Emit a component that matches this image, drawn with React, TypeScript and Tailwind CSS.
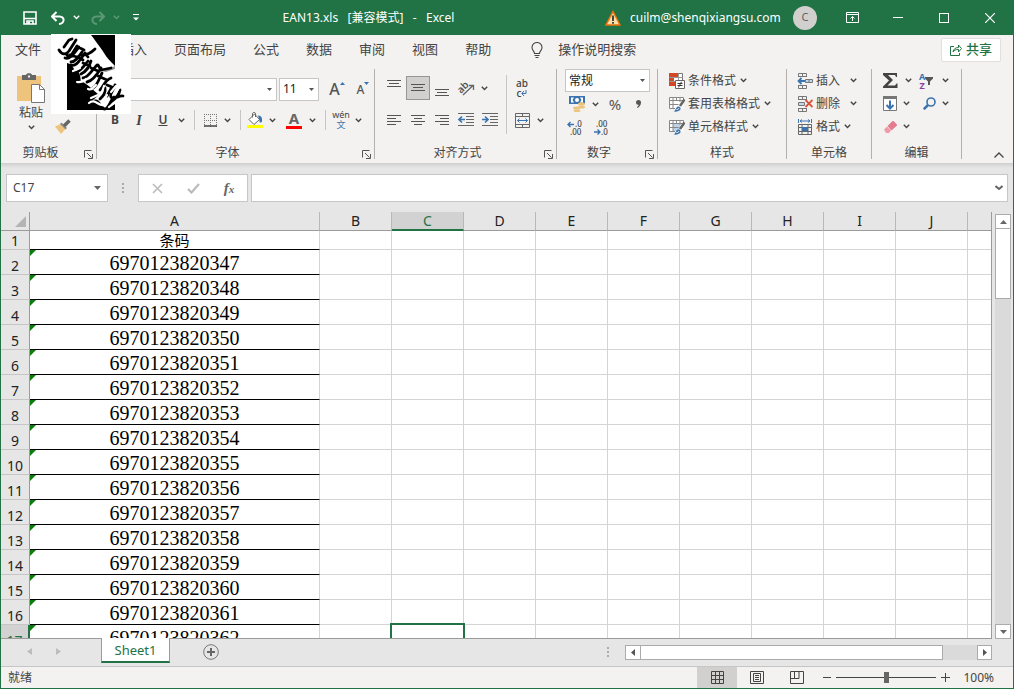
import type { ReactNode } from 'react';
import clsx from 'clsx';

const TABS = ['文件', '开始', '插入', '页面布局', '公式', '数据', '审阅', '视图', '帮助'];
const COLUMNS = ['A', 'B', 'C', 'D', 'E', 'F', 'G', 'H', 'I', 'J'];
const FIRST_CODE = 6970123820347;
const ROWS = Array.from({ length: 17 }, (_, i) => ({
    row: i + 1,
    value: i === 0 ? '条码' : String(FIRST_CODE + i - 1),
}));

/* ---------- shared pieces ---------- */

function Svg({ w = 16, h = 16, children }: { w?: number; h?: number; children: ReactNode }) {
    return (
        <svg width={w} height={h} viewBox={`0 0 ${w} ${h}`} fill="none" className="block shrink-0" aria-hidden="true">
            {children}
        </svg>
    );
}

function Chevron() {
    return (
        <Svg w={7} h={5}>
            <path d="M.8 .8 3.5 3.5 6.2 .8" stroke="currentColor" strokeWidth="1.4" />
        </Svg>
    );
}

function Triangle() {
    return (
        <Svg w={7} h={4}>
            <path d="M0 0h7L3.5 4z" fill="#666" />
        </Svg>
    );
}

function IconButton({ label, className, children }: { label: string; className?: string; children: ReactNode }) {
    return (
        <button type="button" aria-label={label} className={clsx('flex shrink-0 items-center justify-center', className)}>
            {children}
        </button>
    );
}

function Drop({ label, className = 'w-3' }: { label: string; className?: string }) {
    return (
        <IconButton label={label} className={clsx('h-5', className)}>
            <Chevron />
        </IconButton>
    );
}

function Separator({ className }: { className?: string }) {
    return (
        <div className={clsx('flex shrink-0 justify-center', className)}>
            <div className="w-px bg-[#c8c6c4]" />
        </div>
    );
}

function Combo({ label, value, className }: { label: string; value: string; className?: string }) {
    return (
        <div className={clsx('grid h-[23px] shrink-0 items-center border border-[#c6c6c6] bg-white', className)}>
            <select aria-label={label} className="col-start-1 row-start-1 h-full w-full appearance-none bg-transparent pl-[3px] text-[12px] text-[#222]">
                <option>{value}</option>
            </select>
            <span className="pointer-events-none col-start-1 row-start-1 mr-1 justify-self-end">
                <Svg w={5} h={3}>
                    <path d="M0 0h5L2.5 3z" fill="#555" />
                </Svg>
            </span>
        </div>
    );
}

function Group({ label, launcher, className, inner, children }: { label: string; launcher?: boolean; className?: string; inner?: string; children: ReactNode }) {
    return (
        <section aria-label={label} className={clsx('flex h-[90px] shrink-0 flex-col border-r border-[#b3b0ad]', className)}>
            <div className={clsx('min-h-0 flex-1', inner)}>{children}</div>
            <div className="flex h-3 items-center">
                <span className="flex-1 text-center text-[12px] leading-4">{label}</span>
                {launcher && (
                    <IconButton label={`${label}设置`} className="mr-[3px] ml-1 self-end">
                        <Svg w={9} h={9}>
                            <path d="M.5 7.5v-7h7M3 3l4.5 4.5M8.5 4v4.5H4" stroke="#555" />
                        </Svg>
                    </IconButton>
                )}
            </div>
        </section>
    );
}

function MenuRow({ label, icon, wide }: { label: string; icon: ReactNode; wide?: boolean }) {
    return (
        <button type="button" className="flex h-[23px] items-center text-[12px]">
            {icon}
            <span className={clsx('ml-[3px]', wide ? 'mr-[10px]' : 'mr-1')}>{label}</span>
            <Chevron />
        </button>
    );
}

/* ---------- icons ---------- */

function Lines({ rows, y = 0 }: { rows: [number, number][]; y?: number }) {
    return (
        <Svg w={14} h={16}>
            {rows.map(([x, w], i) => (
                <path key={i} d={`M${x} ${y + i * 3 + 0.5}h${w}`} stroke="#555" />
            ))}
        </Svg>
    );
}

function IndentIcon({ out }: { out?: boolean }) {
    return (
        <Svg>
            <path d="M0 1.5h16M8 4.5h8M8 7.5h8M8 10.5h8M0 13.5h16" stroke="#666" />
            <path d={out ? 'M7 7.5H1M4 4.5l-3 3 3 3' : 'M0 7.5h6M3 4.5l3 3-3 3'} stroke="#3b73af" strokeWidth="1.7" />
        </Svg>
    );
}

function DecimalIcon({ less }: { less?: boolean }) {
    return (
        <svg width="17" height="18" viewBox="0 0 17 18" className="block overflow-visible" aria-hidden="true">
            <text x={less ? 3 : 8} y="8" fontSize="8" fontFamily="Noto Sans" fontWeight="500" fill="#444">{less ? '.00' : '.0'}</text>
            <text x={less ? 8 : 3} y="16" fontSize="8" fontFamily="Noto Sans" fontWeight="500" fill="#444">{less ? '.0' : '.00'}</text>
            <path d={less ? 'M1 13h6M4.500 10.500 7 13l-2.500 2.500' : 'M7 5.500H1M3.500 3 1 5.500 3.500 8'} fill="none" stroke="#3b73af" strokeWidth="1.4" />
        </svg>
    );
}

function SheetBrush({ fill }: { fill: string }) {
    return (
        <Svg>
            <path d="M.5 1.500h14v11H.5z" fill="#fff" />
            <path d="M4 5h7v7H4z" fill={fill} />
            <path d="M.5 1.500h14v3M6 12.500H.500v-11M.5 4.500h14M.5 8.500h9M4 1.500v11M11 1.500V6M7.500 1.500v3" stroke="#888" />
            <path d="m15.500 3.500-4.500 6.500" stroke="#666" strokeWidth="2.600" />
            <path d="M4.500 15.500c2.500-.5 2-4.500 4.500-5 1.800-.2 3 1.200 2.500 2.800-.7 2-4.500 2.700-7 2.200z" fill="#3b73af" />
            <path d="M7.500 13.500c1.500 0 2-.5 2.500-1.500" stroke="#fff" />
        </Svg>
    );
}

function CondIcon() {
    return (
        <Svg>
            <path d="M.5 .5h13v12H.5z" fill="#fff" stroke="#777" />
            <path d="M.5 4.500h13M.5 8.500h8M9.500 .5V7" stroke="#999" />
            <path d="M0 0h9v4H0zM0 5h5v3H0zM0 9h6v4H0z" fill="#d24726" />
            <path d="M6.500 7.500h9v8h-9z" fill="#fff" stroke="#666" />
            <path d="M8.500 10.500h5M8.500 12.500h5M12.500 8.800l-3 5.500" stroke="#333" />
        </Svg>
    );
}

function CellIcon({ kind }: { kind: 'insert' | 'delete' | 'format' }) {
    return (
        <Svg>
            {kind === 'format' ? (
                <>
                    <path d="M1.500 0v4M14.500 0v4M3 2h10M5 .5 3 2l2 1.500M11 .5 13 2l-2 1.500" stroke="#3b73af" />
                    <path d="M1.500 5.500h13v10h-13zM1.500 8.500h13M1.500 12.500h13M5 5.500v10M11 5.500v10" stroke="#666" />
                    <path d="M5 8h6v4H5z" fill="#3b73af" />
                </>
            ) : (
                <>
                    <path d="M1.500 4V.5h8V4M5.500 .5V4M1.500 3.500h8M1.500 12v3.500h8V12M5.500 12v3.500M1.500 12.500h8" stroke="#777" />
                    {kind === 'insert' ? (
                        <>
                            <path d="M8.500 6.500h7v3h-7zM12 6.500v3" fill="#c3d7ea" stroke="#777" />
                            <path d="M8 8H1.500M4.500 5l-3 3 3 3" stroke="#3b73af" strokeWidth="1.800" />
                        </>
                    ) : (
                        <>
                            <path d="M1.500 6.500h6v3h-6z" fill="#c3d7ea" stroke="#777" />
                            <path d="m8.500 4 7 7m0-7-7 7" stroke="#d9533a" strokeWidth="1.800" />
                        </>
                    )}
                </>
            )}
        </Svg>
    );
}

/* Brush-stroke emblem, black ink on a white tile */
function Emblem() {
    return (
        <svg viewBox="0 0 80 80" className="absolute top-[34px] left-[50px] size-20 bg-white" fill="none" role="img" aria-label="徽标">
            <path d="M40 1h24v31c-5-5-8-8-11-13S46 9 40 1z" fill="#000" />
            <path d="M16 29c5 1 6 4 8 8 6 1 5 6 6 10 4 2 7 4 10 7l8 7-6 5 9 5 5 5H16z" fill="#000" />
            <path d="M54 76h10v-6z" fill="#000" />
            <path d="m50 37 14-5v3l-9 3z" fill="#999" />
            <g stroke="#000" strokeWidth="2.800" strokeLinecap="round" strokeLinejoin="round">
                <path d="M8 16c3 5 7 5 10 1l7-11M13 13l5-7 3-1M17 18c-3 4 0 5 4 2l5-8" />
                <path d="M14 24c5 2 9-5 14-11M20 28c4 0 7-4 11-10M19 21l7 2M27 13l6 3" />
                <path d="M20 31c6 2 9-6 14-12M27 23l5 3M31 21c4 0 8-1 13-6M34 19l3 4" />
                <path d="M24 39c6-2 9-7 13-12M32 29l7 3M30 40c6-3 8-7 10-13" />
                <path d="M32 44c5 0 10-9 14-13M40 34l7 3M47 31l3 5 10-2M36 48c6-1 11-9 14-14" />
                <path d="M42 54c4-2 6-9 9-15M47 42l9 4M49 56c4-4 4-9 11-12" />
                <path d="M44 67c6-1 4 9 10 8 4-1 5-8 9-12M54 54c1 5-2 8-5 11M56 51l5 2-5 9" />
                <path d="M64 51c-1 6-6 8-4 12s8-2 12-1M69 56c-1 6-5 9-9 12" />
            </g>
            <g stroke="#fff" strokeWidth="2.200" strokeLinecap="round" strokeLinejoin="round">
                <path d="m22 37 7-3M26 48c5 1 7-1 9-3M37 55c4 2 6-2 8-4" />
                <path d="M38 69c7-6 10 6 17 1M40 64l7-3M51 58l2-6M52 68l4-7" />
                <path d="M60 58l5-6M58 73l9-7M64 60l4-6" />
            </g>
        </svg>
    );
}

/* ---------- window parts ---------- */

function TitleBar() {
    return (
        <header className="flex h-[35px] items-center bg-[#217346] pr-px text-[12px] text-white">
            <div className="flex h-full items-center pl-[14px]">
                <IconButton label="保存" className="h-6 w-8">
                    <Svg w={14} h={14}>
                        <path d="M1 1h12v12H1z" stroke="#fff" strokeWidth="1.600" />
                        <path d="M1 7.500h12M4 13v-3h6v3" stroke="#fff" strokeWidth="1.600" />
                        <path d="M5 10.500h2V13H5z" fill="#fff" />
                    </Svg>
                </IconButton>
                <IconButton label="撤消" className="h-6 w-6">
                    <Svg w={14} h={14}>
                        <path d="M1 5.500h7.500c6 .5 5 7-.5 7.500M5.500 1 1 5.500 5.500 10" stroke="#fff" strokeWidth="2" />
                    </Svg>
                </IconButton>
                <Drop label="撤消列表" />
                <IconButton label="恢复" className="ml-[2px] h-6 w-7 text-[#5b9876]">
                    <Svg w={14} h={14}>
                        <path d="M13 5.500H5.500c-6 .5-5 7 .5 7.500M8.500 1 13 5.500 8.500 10" stroke="currentColor" strokeWidth="2" />
                    </Svg>
                </IconButton>
                <span className="text-[#5b9876]">
                    <Drop label="恢复列表" className="w-2" />
                </span>
                <IconButton label="自定义快速访问工具栏" className="h-6 w-8">
                    <Svg w={6} h={7}>
                        <path d="M0 .5h6" stroke="#fff" />
                        <path d="M0 3.500h6l-3 3z" fill="#fff" />
                    </Svg>
                </IconButton>
            </div>
            <h1 className="flex-1 pr-5 text-center whitespace-pre">EAN13.xls   [兼容模式]   -   Excel</h1>
            <Svg w={16} h={16}>
                <path d="M8 1.500 15 15H1z" fill="#fce0a8" stroke="#e8710a" strokeWidth="1.500" />
                <path d="M8 5.500V11M8 12v1.800" stroke="#333" strokeWidth="1.800" />
            </Svg>
            <span className="w-[172px] pl-[9px]">cuilm@shenqixiangsu.com</span>
            <button type="button" className="mr-3 size-6 rounded-full bg-[#d2d0ce] text-[11px] text-[#605e5c]">C</button>
            <IconButton label="功能区显示选项" className="h-full w-[46px]">
                <Svg w={13} h={11}>
                    <path d="M.5 .5h12v10H.5zM.5 2.500h12M6.500 9V4.500M4.500 6.500l2-2 2 2" stroke="#fff" />
                </Svg>
            </IconButton>
            <IconButton label="最小化" className="h-full w-[46px]">
                <span className="h-px w-[10px] bg-white" />
            </IconButton>
            <IconButton label="最大化" className="h-full w-[46px]">
                <span className="size-[10px] border border-white" />
            </IconButton>
            <IconButton label="关闭" className="h-full w-[46px]">
                <Svg w={10} h={10}>
                    <path d="m0 0 10 10M10 0 0 10" stroke="#fff" strokeWidth="1.200" />
                </Svg>
            </IconButton>
        </header>
    );
}

function TabRow() {
    return (
        <nav className="flex h-[29px] items-center pr-3 pl-[14px] text-[13px]">
            <div className="flex gap-[27px]">
                {TABS.map((tab) => (
                    <button key={tab} type="button">{tab}</button>
                ))}
            </div>
            <button type="button" className="ml-10 flex items-center gap-[15px]">
                <Svg w={12} h={16}>
                    <path d="M3.500 11.500c0-2.500-2.500-3-2.500-6a5 5 0 0 1 10 0c0 3-2.500 3.500-2.500 6zM3.500 13.500h5M4.500 15.500h3" stroke="#444" strokeWidth="1.100" />
                </Svg>
                操作说明搜索
            </button>
            <button type="button" className="ml-auto flex h-6 w-[60px] items-center justify-center gap-1 rounded-xs border border-[#e1dfdd] bg-white font-medium text-[#217346]">
                <Svg w={12} h={12}>
                    <path d="M4 2.500H.5v9h9V9M3 8c.5-3 2.500-4.500 5.500-4.500V1l3 3.500-3 3.500V5.500C6 5.500 4.500 6 3 8z" stroke="#217346" />
                </Svg>
                共享
            </button>
        </nav>
    );
}

function ClipboardGroup() {
    return (
        <Group label="剪贴板" launcher className="w-24">
            <div className="flex">
                <button type="button" className="ml-4 flex w-7 flex-col items-center pt-1 text-[12px] leading-4">
                    <Svg w={28} h={30}>
                        <path d="M0 3h24v25H0z" fill="#eec47c" />
                        <path d="M5 2h4c0-2.500 6-2.500 6 0h4v5H5z" fill="#666" />
                        <path d="M11 2.500h2v2h-2z" fill="#f3f2f1" />
                        <path d="M14.500 11.500h8l5 5v13h-13z" fill="#fff" stroke="#777" />
                        <path d="M22.500 11.500v5h5" stroke="#777" />
                    </Svg>
                    <span className="mt-[2px]">粘贴</span>
                    <span className="mt-1"><Chevron /></span>
                </button>
                <IconButton label="格式刷" className="mt-[46px] ml-[6px] h-6 w-6">
                    <Svg>
                        <path d="M0 7.500 5.500 5l5 5L6 15z" fill="#eec47c" />
                        <path d="m5 5 1.500-1.500L12 9l-1.500 1.500z" fill="#888" />
                        <path d="m9 7 5.500-5.500" stroke="#666" strokeWidth="3.500" />
                    </Svg>
                </IconButton>
            </div>
        </Group>
    );
}

function FontGroup() {
    return (
        <Group label="字体" launcher className="w-[278px]" inner="pl-[6px]">
            <div className="flex items-center gap-[2px] pt-2">
                <Combo label="字体" value="等线" className="w-[174px]" />
                <Combo label="字号" value="11" className="w-10" />
                <IconButton label="增大字号" className="ml-1 h-6 w-6 text-[16px] font-medium text-[#555]">
                    <span>A</span>
                    <span className="mb-3"><Svg w={5} h={3}><path d="M0 3h5L2.500 0z" fill="#3b73af" /></Svg></span>
                </IconButton>
                <IconButton label="减小字号" className="h-6 w-6 text-[12px] font-medium text-[#555]">
                    <span className="pt-[2px]">A</span>
                    <span className="mb-3"><Svg w={5} h={3}><path d="M0 0h5L2.500 3z" fill="#3b73af" /></Svg></span>
                </IconButton>
            </div>
            <div className="mt-[9px] flex h-5 items-center">
                <button type="button" className="w-6 text-[12px] font-bold">B</button>
                <button type="button" className="w-6 font-['Liberation_Serif'] text-[14px] font-bold italic">I</button>
                <button type="button" className="w-6 text-[12px] font-semibold underline">U</button>
                <Drop label="下划线样式" />
                <Separator className="h-5 w-[15px] *:h-5" />
                <IconButton label="下框线" className="h-5 w-4">
                    <Svg w={13} h={13}>
                        <path d="M.5 0v13M6.500 0v13M12.500 0v13M0 .5h13M0 6.500h13" stroke="#777" strokeDasharray="1 1" />
                        <path d="M0 12h13" stroke="#444" strokeWidth="1.500" />
                    </Svg>
                </IconButton>
                <Drop label="边框" className="w-[18px]" />
                <Separator className="h-5 w-2 *:h-5" />
                <IconButton label="填充颜色" className="h-5 w-[22px]">
                    <Svg>
                        <path d="M2 7.500 7.500 2l5 5.500L7 12.500z" fill="#fff" stroke="#666" />
                        <path d="M5.500 5.500V1.500C6 0 8.500 0 8.500 2v3" stroke="#666" />
                        <path d="M11 3.500c3 0 4.500 2 4 6-1 2-3 1-2.500-1z" fill="#3b73af" />
                        <path d="M0 13h16v3H0z" fill="#ff0" />
                    </Svg>
                </IconButton>
                <Drop label="填充颜色列表" />
                <button type="button" aria-label="字体颜色" className="ml-1 flex h-5 w-6 flex-col items-center">
                    <span className="h-4 text-[15px] leading-4 font-bold text-[#666]">A</span>
                    <span className="h-[3px] w-4 shrink-0 bg-[#f00]" />
                </button>
                <Drop label="字体颜色列表" />
                <Separator className="h-5 w-[14px] *:h-5" />
                <button type="button" aria-label="拼音" className="flex w-[18px] flex-col items-center text-[9px] leading-[10px]">
                    <span>wén</span>
                    <span className="text-[#3b73af]">文</span>
                </button>
                <Drop label="拼音列表" className="w-4" />
            </div>
        </Group>
    );
}

function AlignGroup() {
    return (
        <Group label="对齐方式" launcher className="w-[182px]" inner="pl-[7px]">
            <div className="flex pt-[6px]">
                <div>
                    <div className="flex h-[26px] items-center">
                        <IconButton label="顶端对齐" className="h-6 w-6"><Lines y={0} rows={[[0, 14], [2, 10], [0, 14]]} /></IconButton>
                        <IconButton label="垂直居中" className="h-6 w-6 border border-[#979593] bg-[#d2d0ce]"><Lines y={4} rows={[[0, 14], [2, 10], [0, 14]]} /></IconButton>
                        <IconButton label="底端对齐" className="h-6 w-6"><Lines y={9} rows={[[0, 14], [2, 10], [0, 14]]} /></IconButton>
                        <IconButton label="方向" className="h-6 w-6">
                            <svg width="17" height="16" viewBox="0 0 17 16" className="block overflow-visible" aria-hidden="true">
                                <text x="0" y="11" fontSize="10" fontFamily="Noto Sans" fontWeight="600" fill="#555" transform="rotate(-45 5 9)">ab</text>
                                <path d="m5 15 10-9.500M11 5.500h4.500V10" fill="none" stroke="#666" strokeWidth="1.300" />
                            </svg>
                        </IconButton>
                        <Drop label="方向列表" />
                    </div>
                    <div className="mt-[6px] flex h-[26px] items-center">
                        <IconButton label="左对齐" className="h-6 w-6"><Lines y={3} rows={[[0, 14], [0, 9], [0, 14], [0, 9]]} /></IconButton>
                        <IconButton label="居中" className="h-6 w-6"><Lines y={3} rows={[[0, 14], [3, 8], [0, 14], [3, 8]]} /></IconButton>
                        <IconButton label="右对齐" className="h-6 w-6"><Lines y={3} rows={[[0, 14], [5, 9], [0, 14], [5, 9]]} /></IconButton>
                        <IconButton label="减少缩进量" className="h-6 w-6"><IndentIcon out /></IconButton>
                        <IconButton label="增加缩进量" className="h-6 w-6"><IndentIcon /></IconButton>
                    </div>
                </div>
                <Separator className="w-2 *:h-[59px]" />
                <div>
                    <button type="button" aria-label="自动换行" className="flex h-[26px] w-6 flex-col items-center justify-center text-[10px] leading-[10px] font-medium">
                        <span>ab</span>
                        <span className="flex items-center">
                            c
                            <Svg w={6} h={6}><path d="M5 0v3.500H1M3 1 .8 3.500 3 6" stroke="#3b73af" /></Svg>
                        </span>
                    </button>
                    <div className="mt-[6px] flex h-[26px] items-center">
                        <IconButton label="合并后居中" className="h-6 w-6">
                            <Svg w={15} h={15}>
                                <path d="M.5 .5h14v14H.5zM.5 3.500h14M.5 11.500h14M7.500 .5v3M7.500 11.500v3" stroke="#666" />
                                <path d="M2.500 7.500h10M4.500 5.500l-2 2 2 2M10.500 5.500l2 2-2 2" stroke="#3b73af" />
                            </Svg>
                        </IconButton>
                        <Drop label="合并列表" />
                    </div>
                </div>
            </div>
        </Group>
    );
}

function NumberGroup() {
    return (
        <Group label="数字" launcher className="w-[101px]">
            <div className="pl-2">
                <Combo label="数字格式" value="常规" className="w-[85px]" />
                <div className="flex h-6 items-center">
                    <IconButton label="会计数字格式" className="h-6 w-6">
                        <Svg>
                            <path d="M0 0h16v8H0z" fill="#3b73af" />
                            <path d="M2 1.500h3L3.500 4 5 6.500H2zM14 1.500h-3L12.500 4 11 6.500h3z" fill="#fff" />
                            <circle cx="8" cy="4" r="2" fill="#fff" />
                            <ellipse cx="12.500" cy="8" rx="3.500" ry="1.700" fill="#eec47c" />
                            <ellipse cx="12.500" cy="11" rx="3.500" ry="1.500" fill="#eec47c" />
                            <ellipse cx="7.500" cy="12" rx="3.500" ry="1.500" fill="#eec47c" />
                            <ellipse cx="8" cy="14.700" rx="3.500" ry="1.300" fill="#eec47c" />
                        </Svg>
                    </IconButton>
                    <Drop label="会计格式列表" />
                    <button type="button" className="ml-1 w-5 text-[15px] text-[#555]">%</button>
                    <button type="button" aria-label="千位分隔样式" className="ml-[3px] flex h-6 w-5 items-center justify-center">
                        <Svg w={5} h={8}>
                            <path d="M0 2.500a2.300 2.300 0 0 1 5 0C5 5 3.500 7 1.500 8L1 7c1-.7 1.500-1.300 1.600-2.200A2.300 2.300 0 0 1 0 2.500z" fill="#555" />
                        </Svg>
                    </button>
                </div>
                <div className="flex h-6 items-center">
                    <IconButton label="增加小数位数" className="h-6 w-5"><DecimalIcon /></IconButton>
                    <IconButton label="减少小数位数" className="ml-1 h-6 w-6"><DecimalIcon less /></IconButton>
                </div>
            </div>
        </Group>
    );
}

function EditingGroup() {
    return (
        <Group label="编辑" className="w-[90px]">
            <div className="grid grid-cols-[39px_auto] pl-2">
                <div className="flex h-[23px] items-center gap-[2px]">
                    <IconButton label="自动求和" className="h-5 w-5">
                        <Svg w={15} h={15}><path d="M0 0h14v4h-1l-1-2H5l5 5-5.500 5.500H12l1.500-2h1V15H0v-1.500L6 7.500 0 2z" fill="#444" /></Svg>
                    </IconButton>
                    <Drop label="求和列表" />
                </div>
                <div className="flex h-[23px] items-center">
                    <button type="button" aria-label="排序和筛选" className="flex w-5 items-center text-[9px] leading-[9px] font-bold">
                        <span className="flex flex-col">
                            <span className="text-[#3b73af]">A</span>
                            <span className="text-[#8a3fa0]">Z</span>
                        </span>
                        <Svg w={8} h={8}><path d="M0 0h8v1.500L5 4.500V8H3V4.500L0 1.500z" fill="#555" /></Svg>
                    </button>
                    <Drop label="排序列表" />
                </div>
                <div className="flex h-[23px] items-center">
                    <IconButton label="填充" className="h-5 w-5">
                        <Svg w={14} h={15}>
                            <path d="M.5 .5h13v14H.5z" fill="#fff" stroke="#777" />
                            <path d="M0 0h14v3H0z" fill="#777" />
                            <path d="M7 4.500v8M3.500 9 7 12.500 10.500 9" stroke="#3b73af" strokeWidth="2" />
                        </Svg>
                    </IconButton>
                    <Drop label="填充列表" />
                </div>
                <div className="flex h-[23px] items-center">
                    <IconButton label="查找和选择" className="h-5 w-5">
                        <Svg w={13} h={13}>
                            <circle cx="8" cy="5" r="4" stroke="#3b73af" strokeWidth="1.600" />
                            <path d="M5 8 .8 12.200" stroke="#3b73af" strokeWidth="2.500" />
                        </Svg>
                    </IconButton>
                    <Drop label="查找列表" />
                </div>
                <div className="flex h-[23px] items-center">
                    <IconButton label="清除" className="h-5 w-5">
                        <Svg w={13} h={12}>
                            <path d="M0 8.500 3 5.500l4 4L5 12H2z" fill="#ef9aa8" />
                            <path d="m3.500 5 5-5h1L13 3.500v1l-5.500 5z" fill="#e57b8e" />
                        </Svg>
                    </IconButton>
                    <Drop label="清除列表" />
                </div>
            </div>
        </Group>
    );
}

function Ribbon() {
    return (
        <div className="flex pt-[5px] pb-1">
            <ClipboardGroup />
            <FontGroup />
            <AlignGroup />
            <NumberGroup />
            <Group label="样式" className="w-[129px]" inner="flex flex-col items-start pl-[11px]">
                <MenuRow label="条件格式" icon={<CondIcon />} />
                <MenuRow label="套用表格格式" icon={<SheetBrush fill="#fff" />} />
                <MenuRow label="单元格样式" icon={<SheetBrush fill="#bcd3ea" />} />
            </Group>
            <Group label="单元格" className="w-[85px]" inner="flex flex-col items-start pl-[10px]">
                <MenuRow label="插入" icon={<CellIcon kind="insert" />} wide />
                <MenuRow label="删除" icon={<CellIcon kind="delete" />} wide />
                <MenuRow label="格式" icon={<CellIcon kind="format" />} />
            </Group>
            <EditingGroup />
            <IconButton label="折叠功能区" className="mr-2 ml-auto h-2 w-3 self-end">
                <Svg w={10} h={6}><path d="M.5 5.500 5 1l4.500 4.500" stroke="#444" strokeWidth="1.300" /></Svg>
            </IconButton>
        </div>
    );
}

function Dots() {
    return (
        <Svg w={2} h={10}>
            <path d="M0 0h2v2H0zM0 4h2v2H0zM0 8h2v2H0z" fill="#aaa" />
        </Svg>
    );
}

function FormulaBar() {
    return (
        <div className="flex h-[49px] items-start bg-linear-to-b from-[#cfcfcf] to-[#e6e6e6] to-10% px-[5px] pt-[11px]">
            <div className="flex h-7 w-[102px] items-center border border-[#c6c6c6] bg-white">
                <input aria-label="名称框" defaultValue="C17" className="w-20 flex-1 bg-transparent pl-[6px] text-[12px]" />
                <IconButton label="名称列表" className="h-6 w-5"><Triangle /></IconButton>
            </div>
            <div className="flex h-7 w-[30px] items-center justify-center"><Dots /></div>
            <div className="flex h-7 w-[110px] items-center border border-[#c6c6c6] bg-white">
                <IconButton label="取消" className="h-6 w-9">
                    <Svg w={11} h={11}><path d="m1 1 9 9M10 1 1 10" stroke="#bbb" strokeWidth="1.600" /></Svg>
                </IconButton>
                <IconButton label="输入" className="h-6 w-9">
                    <Svg w={13} h={11}><path d="m1 6 3.500 3.500L12 1" stroke="#bbb" strokeWidth="2.200" /></Svg>
                </IconButton>
                <button type="button" aria-label="插入函数" className="w-9 font-['Liberation_Serif'] text-[15px] leading-6 font-bold text-[#666] italic">
                    f<span className="text-[11px]">x</span>
                </button>
            </div>
            <div className="ml-[3px] flex h-7 flex-1 items-center border border-[#c6c6c6] bg-white">
                <input aria-label="编辑栏" className="min-w-0 flex-1 bg-transparent px-2 text-[12px]" />
                <IconButton label="展开编辑栏" className="h-6 w-4">
                    <Svg w={8} h={6}><path d="m.5 1 3.500 3 3.500-3" stroke="#666" strokeWidth="2" /></Svg>
                </IconButton>
            </div>
        </div>
    );
}

function Sheet() {
    return (
        <div className="flex min-h-0 flex-1 bg-[#e6e6e6]">
            <div className="min-w-0 flex-1 overflow-hidden border-r border-b border-[#9b9b9b]">
                <table className="w-full table-fixed border-separate border-spacing-0">
                    <colgroup>
                        <col className="w-[29px]" />
                        <col className="w-[290px]" />
                        {COLUMNS.slice(1).map((c) => (
                            <col key={c} className="w-18" />
                        ))}
                        <col />
                    </colgroup>
                    <thead>
                        <tr className="h-[19px] bg-[#e6e6e6] text-[14px] leading-[18px] text-[#222]">
                            <td className="border-r border-b border-[#9b9b9b] p-0">
                                <span className="mr-[3px] flex justify-end">
                                    <Svg w={11} h={11}><path d="M11 0v11H0z" fill="#b4b4b4" /></Svg>
                                </span>
                            </td>
                            {COLUMNS.map((c) => (
                                <th
                                    key={c}
                                    scope="col"
                                    className={clsx(
                                        'border-r border-r-[#b8b8b8] p-0 font-normal',
                                        c === 'C' ? 'border-b-2 border-b-[#217346] bg-[#d2d2d2] leading-[17px] text-[#217346]' : 'border-b border-b-[#9b9b9b]'
                                    )}
                                >
                                    {c}
                                </th>
                            ))}
                            <td className="border-b border-[#9b9b9b] p-0" />
                        </tr>
                    </thead>
                    <tbody className="bg-white">
                        {ROWS.map(({ row, value }) => (
                            <tr key={row} className={row === 1 ? 'h-[19px]' : 'h-[25px]'}>
                                <th
                                    scope="row"
                                    className={clsx(
                                        'border-b border-b-[#c6c6c6] p-0 align-bottom text-[14px] leading-4 font-normal',
                                        row === 17 ? 'border-r-2 border-r-[#217346] bg-[#d2d2d2] text-[#217346]' : 'border-r border-r-[#9b9b9b] bg-[#e6e6e6] text-[#222]'
                                    )}
                                >
                                    {row}
                                </th>
                                <td
                                    className={clsx(
                                        'relative border-r border-b border-r-[#d4d4d4] border-b-black px-0 pb-0 text-center text-black',
                                        row === 1 ? 'pt-0 text-[15px] leading-[18px]' : "pt-[2px] font-['Liberation_Serif'] text-[20px] leading-[22px]"
                                    )}
                                >
                                    {row > 1 && (
                                        <span className="absolute top-0 left-0">
                                            <Svg w={6} h={6}><path d="M0 0h6L0 6z" fill="#0a7d0a" /></Svg>
                                        </span>
                                    )}
                                    {value}
                                </td>
                                {COLUMNS.slice(1).map((c) => (
                                    <td key={c} className="relative border-r border-b border-[#d4d4d4] p-0">
                                        {row === 17 && c === 'C' && <span className="absolute -inset-[2px] border-2 border-[#217346]" />}
                                    </td>
                                ))}
                                <td className="border-b border-[#d4d4d4] p-0" />
                            </tr>
                        ))}
                    </tbody>
                </table>
            </div>
            <div className="mr-[2px] ml-[3px] flex w-4 flex-col bg-[#dadada]">
                <div className="h-[2px] bg-[#e6e6e6]" />
                <IconButton label="向上滚动" className="h-[15px] w-4 border border-[#ababab] bg-white">
                    <Svg w={7} h={4}><path d="M0 4h7L3.500 0z" fill="#666" /></Svg>
                </IconButton>
                <div className="h-[70px] border border-t-0 border-[#ababab] bg-white" />
                <IconButton label="向下滚动" className="mt-auto h-[15px] w-4 border border-[#ababab] bg-white"><Triangle /></IconButton>
            </div>
        </div>
    );
}

function SheetTabs() {
    return (
        <div className="flex h-[27px] items-start bg-[#e6e6e6] pr-[21px]">
            <div className="flex h-6 w-[100px] items-center gap-6 pl-[26px]">
                <IconButton label="上一工作表"><Svg w={5} h={7}><path d="M5 0v7L0 3.500z" fill="#bdbdbd" /></Svg></IconButton>
                <IconButton label="下一工作表"><Svg w={5} h={7}><path d="M0 0v7l5-3.500z" fill="#bdbdbd" /></Svg></IconButton>
            </div>
            <button type="button" className="-mt-px h-[25px] w-[69px] border-x border-b-2 border-x-[#9b9b9b] border-b-[#217346] bg-white text-[13px] leading-[22px] text-[#217346]">
                Sheet1
            </button>
            <IconButton label="新工作表" className="mt-[5px] ml-[33px]">
                <Svg w={16} h={16}>
                    <circle cx="8" cy="8" r="7.300" stroke="#777" />
                    <path d="M8 4v8M4 8h8" stroke="#666" strokeWidth="2" />
                </Svg>
            </IconButton>
            <div className="mt-2 mr-4 ml-auto"><Dots /></div>
            <div className="mt-[6px] flex h-[15px] w-[367px] bg-[#dadada]">
                <IconButton label="向左滚动" className="w-4 border border-[#ababab] bg-white"><Svg w={4} h={7}><path d="M4 0v7L0 3.500z" fill="#555" /></Svg></IconButton>
                <div className="w-[302px] border border-l-0 border-[#ababab] bg-white" />
                <IconButton label="向右滚动" className="ml-auto w-[15px] border border-[#ababab] bg-white"><Svg w={4} h={7}><path d="M0 0v7l4-3.500z" fill="#555" /></Svg></IconButton>
            </div>
        </div>
    );
}

function StatusBar() {
    return (
        <footer className="flex h-[22px] items-center border-t border-[#c6c6c6] bg-[#f3f2f1] pr-[19px] pl-[7px] text-[12px]">
            <span className="flex-1">就绪</span>
            <IconButton label="普通" className="h-full w-10 bg-[#d2d0ce]">
                <Svg w={13} h={13}><path d="M.5 .5h12v12H.5zM.5 4.500h12M.5 8.500h12M4.500 .5v12M8.500 .5v12" stroke="#444" /></Svg>
            </IconButton>
            <IconButton label="页面布局" className="h-full w-10">
                <Svg w={14} h={13}><path d="M.5 .5h13v12H.5zM3.500 2.500h7v8h-7zM5 4.500h4M5 6.500h4M5 8.500h4" stroke="#444" /></Svg>
            </IconButton>
            <IconButton label="分页预览" className="h-full w-10">
                <Svg w={14} h={13}><path d="M.5 .5h13v12H.5zM4.500 .5v7M.5 7.500h8.500V.5" stroke="#444" /></Svg>
            </IconButton>
            <IconButton label="缩小" className="h-full w-[19px]"><span className="h-px w-2 bg-[#444]" /></IconButton>
            <input
                type="range"
                aria-label="缩放"
                min={0}
                max={200}
                defaultValue={100}
                className="h-3 w-[100px] appearance-none bg-[linear-gradient(#444,#444)] bg-[length:100%_1px] bg-center bg-no-repeat [&::-webkit-slider-thumb]:h-[11px] [&::-webkit-slider-thumb]:w-[5px] [&::-webkit-slider-thumb]:appearance-none [&::-webkit-slider-thumb]:bg-[#666]"
            />
            <IconButton label="放大" className="h-full w-[18px]">
                <Svg w={9} h={9}><path d="M0 4.500h9M4.500 0v9" stroke="#444" /></Svg>
            </IconButton>
            <span className="w-10 text-right">100%</span>
        </footer>
    );
}

export default function App() {
    return (
        <div className="relative flex h-screen flex-col overflow-hidden border-x border-b border-[#217346] bg-[#f3f2f1] font-['Noto_Sans','Noto_Sans_CJK_SC',sans-serif] text-[#444]">
            <div className="-mx-px"><TitleBar /></div>
            <TabRow />
            <Ribbon />
            <FormulaBar />
            <Sheet />
            <SheetTabs />
            <StatusBar />
            <Emblem />
        </div>
    );
}
